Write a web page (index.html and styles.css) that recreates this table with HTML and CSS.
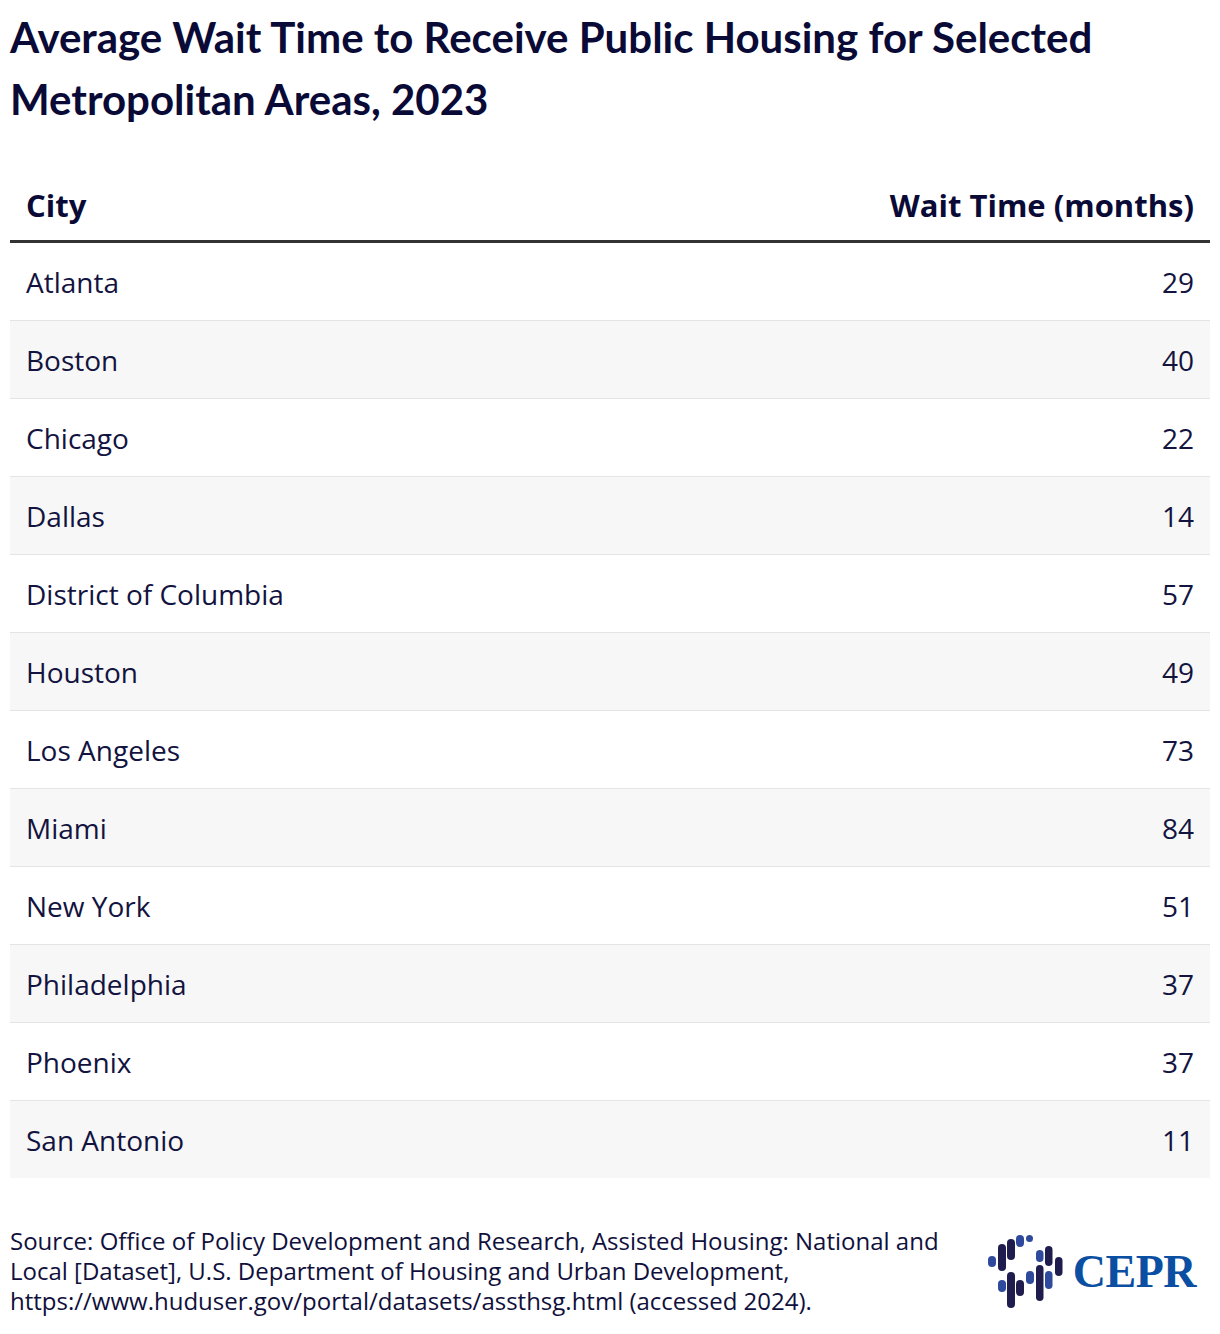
FILE: index.html
```html
<!DOCTYPE html>
<html lang="en">
<head>
<meta charset="utf-8">
<title>Average Wait Time to Receive Public Housing</title>
<link rel="stylesheet" href="styles.css">
</head>
<body>
<div class="page">
  <h1 class="title">Average Wait Time to Receive Public Housing for Selected Metropolitan Areas, 2023</h1>
  <table class="data">
    <thead>
      <tr><th class="city">City</th><th class="num">Wait Time (months)</th></tr>
    </thead>
    <tbody>
      <tr><td>Atlanta</td><td class="num">29</td></tr>
      <tr><td>Boston</td><td class="num">40</td></tr>
      <tr><td>Chicago</td><td class="num">22</td></tr>
      <tr><td>Dallas</td><td class="num">14</td></tr>
      <tr><td>District of Columbia</td><td class="num">57</td></tr>
      <tr><td>Houston</td><td class="num">49</td></tr>
      <tr><td>Los Angeles</td><td class="num">73</td></tr>
      <tr><td>Miami</td><td class="num">84</td></tr>
      <tr><td>New York</td><td class="num">51</td></tr>
      <tr><td>Philadelphia</td><td class="num">37</td></tr>
      <tr><td>Phoenix</td><td class="num">37</td></tr>
      <tr><td>San Antonio</td><td class="num">11</td></tr>
    </tbody>
  </table>
  <div class="footer">
    <p class="source">Source: Office of Policy Development and Research, Assisted Housing: National and Local [Dataset], U.S. Department of Housing and Urban Development, https://www.huduser.gov/portal/datasets/assthsg.html (accessed 2024).</p>
    <div class="logo">
      <svg class="mark" width="85" height="85" viewBox="985 1226 85 85">
        <g fill="#2f4a9c">
          <rect x="990" y="1253" width="8" height="11" rx="4"/>
          <rect x="1018" y="1232" width="8" height="12" rx="4"/>
          <rect x="1028" y="1232" width="7" height="7" rx="3.5"/>
          <rect x="1038" y="1247" width="7.5" height="12" rx="3.75"/>
          <rect x="1000" y="1277" width="8" height="12" rx="4"/>
          <rect x="1028" y="1268" width="8" height="13" rx="4"/>
          <rect x="1047" y="1268" width="7.5" height="18" rx="3.75"/>
        </g>
        <g fill="#1f1d4d">
          <rect x="1000" y="1241" width="8" height="27" rx="4"/>
          <rect x="1009" y="1236" width="8" height="21" rx="4"/>
          <rect x="1047" y="1243" width="7.5" height="20" rx="3.75"/>
          <rect x="1057" y="1254" width="7.5" height="19" rx="3.75"/>
          <rect x="1009" y="1269" width="8" height="36" rx="4"/>
          <rect x="1018" y="1277" width="8" height="16" rx="4"/>
          <rect x="1038" y="1262" width="7.5" height="36" rx="3.75"/>
        </g>
      </svg>
      <span class="wordmark">CEPR</span>
    </div>
  </div>
</div>
</body>
</html>
```
FILE: styles.css
```css
html, body {
  margin: 0;
  padding: 0;
  background: #ffffff;
}
.page {
  width: 1200px;
  padding: 6px 10px 0 10px;
  color: #10103c;
}
.title {
  margin: 0;
  font-family: "Lato", "Liberation Sans", sans-serif;
  font-weight: 700;
  font-size: 42px;
  line-height: 62px;
  color: #0a0a36;
}
.data {
  width: 1200px;
  margin-top: 40px;
  border-collapse: collapse;
  font-family: "Open Sans", "Liberation Sans", sans-serif;
}
.data th {
  font-weight: 700;
  font-size: 31px;
  text-align: left;
  padding: 0 16px;
  height: 70px;
  vertical-align: middle;
  border-bottom: 3px solid #333333;
  color: #0a0a36;
}
.data th.num, .data td.num {
  text-align: right;
}
.data td {
  font-size: 28px;
  padding: 0 16px;
  height: 77px;
  border-bottom: 1px solid #e4e4e4;
  color: #13133f;
}
.data tbody tr:nth-child(even) td {
  background: #f7f7f7;
}
.data tbody tr:last-child td {
  border-bottom: none;
}
.footer {
  display: flex;
  justify-content: space-between;
  align-items: center;
  margin-top: 48px;
}
.source {
  margin: 0;
  width: 950px;
  font-family: "Open Sans", "Liberation Sans", sans-serif;
  font-size: 24px;
  line-height: 30px;
  color: #10103c;
}
.logo {
  display: flex;
  align-items: center;
  margin-right: 14px;
}
.mark {
  display: block;
}
.wordmark {
  font-family: "Liberation Serif", serif;
  font-weight: 700;
  font-size: 46px;
  color: #0b4fa3;
  margin-left: 5px;
  letter-spacing: -0.5px;
}
```
